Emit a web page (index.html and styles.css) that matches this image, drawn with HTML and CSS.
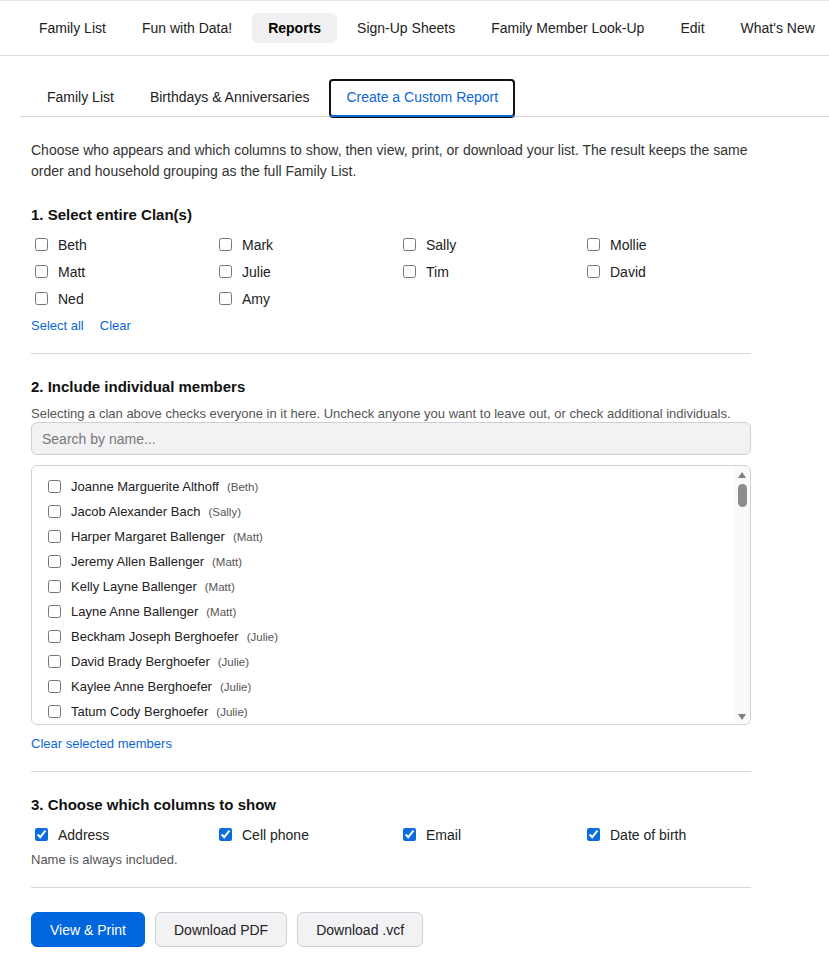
FILE: index.html
```html
<!DOCTYPE html>
<html lang="en">
<head>
  <meta charset="UTF-8" />
  <title>Reports - Create a Custom Report</title>
  <meta name="viewport" content="width=device-width, initial-scale=1.0" />
  <link rel="stylesheet" href="styles.css">
</head>
<body>
  <nav class="topnav">
    <a href="#">Family List</a>
    <a href="#">Fun with Data!</a>
    <a href="#" class="active">Reports</a>
    <a href="#">Sign-Up Sheets</a>
    <a href="#">Family Member Look-Up</a>
    <a href="#">Edit</a>
    <a href="#">What's New</a>
  </nav>

  <div class="tabs">
    <a href="#">Family List</a>
    <a href="#">Birthdays &amp; Anniversaries</a>
    <a href="#" class="current">Create a Custom Report</a>
  </div>

  <main class="report">
    <p class="intro">Choose who appears and which columns to show, then view, print, or download your list. The result keeps the same order and household grouping as the full Family List.</p>

    <section class="step">
      <h2>1. Select entire Clan(s)</h2>
      <div class="check-grid">
        <label><input type="checkbox"> Beth</label>
        <label><input type="checkbox"> Mark</label>
        <label><input type="checkbox"> Sally</label>
        <label><input type="checkbox"> Mollie</label>
        <label><input type="checkbox"> Matt</label>
        <label><input type="checkbox"> Julie</label>
        <label><input type="checkbox"> Tim</label>
        <label><input type="checkbox"> David</label>
        <label><input type="checkbox"> Ned</label>
        <label><input type="checkbox"> Amy</label>
      </div>
      <div class="links">
        <a href="#">Select all</a>
        <a href="#">Clear</a>
      </div>
    </section>

    <section class="step">
      <h2>2. Include individual members</h2>
      <p class="hint">Selecting a clan above checks everyone in it here. Uncheck anyone you want to leave out, or check additional individuals.</p>
      <input type="text" class="search" placeholder="Search by name...">
      <div class="member-box">
        <div class="member-list">
          <label><input type="checkbox"> Joanne Marguerite Althoff <span class="clan">(Beth)</span></label>
          <label><input type="checkbox"> Jacob Alexander Bach <span class="clan">(Sally)</span></label>
          <label><input type="checkbox"> Harper Margaret Ballenger <span class="clan">(Matt)</span></label>
          <label><input type="checkbox"> Jeremy Allen Ballenger <span class="clan">(Matt)</span></label>
          <label><input type="checkbox"> Kelly Layne Ballenger <span class="clan">(Matt)</span></label>
          <label><input type="checkbox"> Layne Anne Ballenger <span class="clan">(Matt)</span></label>
          <label><input type="checkbox"> Beckham Joseph Berghoefer <span class="clan">(Julie)</span></label>
          <label><input type="checkbox"> David Brady Berghoefer <span class="clan">(Julie)</span></label>
          <label><input type="checkbox"> Kaylee Anne Berghoefer <span class="clan">(Julie)</span></label>
          <label><input type="checkbox"> Tatum Cody Berghoefer <span class="clan">(Julie)</span></label>
          <label><input type="checkbox"> Anna Marie Brennan <span class="clan">(Ned)</span></label>
          <label><input type="checkbox"> Thomas Edward Brennan <span class="clan">(Ned)</span></label>
          <label><input type="checkbox"> Claire Louise Carver <span class="clan">(Mollie)</span></label>
          <label><input type="checkbox"> Owen Patrick Carver <span class="clan">(Mollie)</span></label>
          <label><input type="checkbox"> Grace Ellen Dunn <span class="clan">(Amy)</span></label>
          <label><input type="checkbox"> Samuel James Dunn <span class="clan">(Amy)</span></label>
          <label><input type="checkbox"> Emily Rose Fischer <span class="clan">(Tim)</span></label>
          <label><input type="checkbox"> Henry Michael Fischer <span class="clan">(Tim)</span></label>
          <label><input type="checkbox"> Lucy Catherine Hart <span class="clan">(David)</span></label>
          <label><input type="checkbox"> Noah William Hart <span class="clan">(David)</span></label>
          <label><input type="checkbox"> Charlotte Jean Keller <span class="clan">(Mark)</span></label>
          <label><input type="checkbox"> Benjamin Paul Keller <span class="clan">(Mark)</span></label>
          <label><input type="checkbox"> Margaret Ann Kessler <span class="clan">(Beth)</span></label>
          <label><input type="checkbox"> Robert John Kessler <span class="clan">(Beth)</span></label>
          <label><input type="checkbox"> Abigail Lynn Lawson <span class="clan">(Sally)</span></label>
          <label><input type="checkbox"> Daniel Scott Lawson <span class="clan">(Sally)</span></label>
          <label><input type="checkbox"> Ella Grace Lawson <span class="clan">(Sally)</span></label>
          <label><input type="checkbox"> Jack Henry Lawson <span class="clan">(Sally)</span></label>
          <label><input type="checkbox"> Caroline Beth Meyer <span class="clan">(Mollie)</span></label>
          <label><input type="checkbox"> Luke Andrew Meyer <span class="clan">(Mollie)</span></label>
          <label><input type="checkbox"> Sophia Claire Meyer <span class="clan">(Mollie)</span></label>
          <label><input type="checkbox"> William Thomas Meyer <span class="clan">(Mollie)</span></label>
          <label><input type="checkbox"> Ava Katherine Nolan <span class="clan">(Ned)</span></label>
          <label><input type="checkbox"> Edward Francis Nolan <span class="clan">(Ned)</span></label>
          <label><input type="checkbox"> Molly Jane Nolan <span class="clan">(Ned)</span></label>
          <label><input type="checkbox"> Patrick Ryan Nolan <span class="clan">(Ned)</span></label>
          <label><input type="checkbox"> Hannah Marie O'Brien <span class="clan">(Amy)</span></label>
          <label><input type="checkbox"> Liam Joseph O'Brien <span class="clan">(Amy)</span></label>
          <label><input type="checkbox"> Nora Elizabeth O'Brien <span class="clan">(Amy)</span></label>
          <label><input type="checkbox"> Isabel Rose Peters <span class="clan">(Tim)</span></label>
          <label><input type="checkbox"> Mason Lee Peters <span class="clan">(Tim)</span></label>
          <label><input type="checkbox"> Timothy Allen Peters <span class="clan">(Tim)</span></label>
          <label><input type="checkbox"> Olivia Ruth Quinn <span class="clan">(David)</span></label>
          <label><input type="checkbox"> Caleb Matthew Quinn <span class="clan">(David)</span></label>
          <label><input type="checkbox"> Zoe Adeline Quinn <span class="clan">(David)</span></label>
          <label><input type="checkbox"> Ethan James Reilly <span class="clan">(Mark)</span></label>
          <label><input type="checkbox"> Madeline Kay Reilly <span class="clan">(Mark)</span></label>
          <label><input type="checkbox"> Mark Anthony Reilly <span class="clan">(Mark)</span></label>
          <label><input type="checkbox"> Audrey Lynn Schaefer <span class="clan">(Julie)</span></label>
          <label><input type="checkbox"> Joseph Carl Schaefer <span class="clan">(Julie)</span></label>
          <label><input type="checkbox"> Julia Anne Schaefer <span class="clan">(Julie)</span></label>
          <label><input type="checkbox"> Brooke Elaine Stone <span class="clan">(Matt)</span></label>
          <label><input type="checkbox"> Matthew David Stone <span class="clan">(Matt)</span></label>
          <label><input type="checkbox"> Ryan Michael Stone <span class="clan">(Matt)</span></label>
          <label><input type="checkbox"> Amelia Faith Turner <span class="clan">(Beth)</span></label>
          <label><input type="checkbox"> Elizabeth Ann Turner <span class="clan">(Beth)</span></label>
          <label><input type="checkbox"> George Robert Turner <span class="clan">(Beth)</span></label>
          <label><input type="checkbox"> Alice May Walsh <span class="clan">(Sally)</span></label>
          <label><input type="checkbox"> Sarah Louise Walsh <span class="clan">(Sally)</span></label>
          <label><input type="checkbox"> Peter Vincent Walsh <span class="clan">(Sally)</span></label>
          <label><input type="checkbox"> Evelyn Grace Young <span class="clan">(Amy)</span></label>
          <label><input type="checkbox"> Nathan Charles Young <span class="clan">(Amy)</span></label>
        </div>
        <div class="scrollbar" aria-hidden="true">
          <span class="arrow up"></span>
          <span class="thumb"></span>
          <span class="arrow down"></span>
        </div>
      </div>
      <div class="links">
        <a href="#">Clear selected members</a>
      </div>
    </section>

    <section class="step">
      <h2>3. Choose which columns to show</h2>
      <div class="check-grid">
        <label><input type="checkbox" checked> Address</label>
        <label><input type="checkbox" checked> Cell phone</label>
        <label><input type="checkbox" checked> Email</label>
        <label><input type="checkbox" checked> Date of birth</label>
      </div>
      <p class="note">Name is always included.</p>
    </section>

    <div class="actions">
      <button class="primary">View &amp; Print</button>
      <button>Download PDF</button>
      <button>Download .vcf</button>
    </div>
  </main>
</body>
</html>
```

FILE: styles.css
```css
body {
  font-family: 'Liberation Sans', Arial, sans-serif;
  margin: 0;
  background: white;
  color: #222;
  font-size: 14px;
}

a {
  text-decoration: none;
}

.topnav {
  display: flex;
  gap: 4px;
  padding: 12px 0 12px 23px;
  border-top: 1px solid #e3e3e3;
  border-bottom: 1px solid #dcdcdc;
  white-space: nowrap;
  overflow: hidden;
}

.topnav a {
  color: #222;
  padding: 7px 16px;
  line-height: 16px;
  font-size: 14px;
  border-radius: 6px;
}

.topnav a.active {
  background: #f0f0f2;
  color: #000;
  font-weight: bold;
}

.tabs {
  display: flex;
  gap: 4px;
  margin: 23px 0 0 20px;
  padding-left: 11px;
  border-bottom: 1px solid #d6d6d6;
}

.tabs a {
  color: #222;
  padding: 10px 16px;
  line-height: 17px;
  font-size: 14px;
}

.tabs a.current {
  color: #0b66d6;
  border: 2px solid #111;
  border-bottom: 2px solid #0b66d6;
  border-radius: 4px;
  padding: 8px 15px 8px;
  margin-bottom: -1px;
  box-shadow: 0 1px 0 #111;
}

.report {
  width: 720px;
  margin: 0 0 0 31px;
}

.intro {
  margin: 23px 0 0;
  line-height: 21px;
  color: #333;
}

.step {
  border-bottom: 1px solid #d8d8d8;
  padding-bottom: 20px;
}

.step h2 {
  font-size: 15px;
  color: #111;
  margin: 24px 0 7px;
  line-height: 18px;
}

.check-grid {
  display: grid;
  grid-template-columns: repeat(4, 184px);
}

.check-grid label {
  display: flex;
  align-items: center;
  height: 27px;
  color: #222;
}

input[type="checkbox"] {
  margin: 0 10px 0 4px;
  accent-color: #0b6ddb;
}

.links {
  display: flex;
  gap: 16px;
  margin-top: 6px;
  font-size: 13px;
}

.links a {
  color: #0b66d6;
}

.hint {
  margin: 11px 0 0;
  font-size: 13px;
  line-height: 14px;
  color: #555;
}

.search {
  display: block;
  box-sizing: border-box;
  width: 100%;
  height: 33px;
  margin-top: 1px;
  padding: 0 10px;
  border: 1px solid #cfcfd3;
  border-radius: 6px;
  background: #f2f2f4;
  font: 14px 'Liberation Sans', Arial, sans-serif;
}

.search::placeholder {
  color: #777;
}

.member-box {
  position: relative;
  margin-top: 10px;
}

.member-list {
  box-sizing: border-box;
  height: 260px;
  padding: 8px 0 0 12px;
  border: 1px solid #d0d0d0;
  border-radius: 6px;
  overflow-y: auto;
}

.member-list label {
  display: flex;
  align-items: center;
  height: 25px;
  font-size: 13px;
  color: #222;
}

.member-list .clan {
  font-size: 11.5px;
  color: #555;
  margin-left: 8px;
}

/* drawn scrollbar, sits over the list's right edge */
.scrollbar {
  position: absolute;
  top: 1px;
  right: 1px;
  bottom: 1px;
  width: 15px;
  background: #f9f9f9;
  border-radius: 0 5px 5px 0;
}

.scrollbar .arrow {
  position: absolute;
  left: 3px;
  width: 0;
  height: 0;
  border-left: 4.5px solid transparent;
  border-right: 4.5px solid transparent;
}

.scrollbar .up {
  top: 6px;
  border-bottom: 6px solid #7e7e7e;
}

.scrollbar .down {
  bottom: 4px;
  border-top: 6px solid #7e7e7e;
}

.scrollbar .thumb {
  position: absolute;
  top: 18px;
  left: 3px;
  width: 9px;
  height: 23px;
  border-radius: 5px;
  background: #8c8c8c;
}

.member-box + .links {
  margin-top: 11px;
}

.note {
  margin: 4px 0 0;
  font-size: 13px;
  color: #555;
}

.actions {
  display: flex;
  gap: 10px;
  padding: 24px 0 20px;
}

.actions button {
  font: 14px 'Liberation Sans', Arial, sans-serif;
  color: #222;
  padding: 0 18px;
  height: 35px;
  border: 1px solid #d0d0d4;
  border-radius: 6px;
  background: #f2f2f4;
}

.actions button.primary {
  background: #0066dd;
  border-color: #0066dd;
  color: white;
}
```
